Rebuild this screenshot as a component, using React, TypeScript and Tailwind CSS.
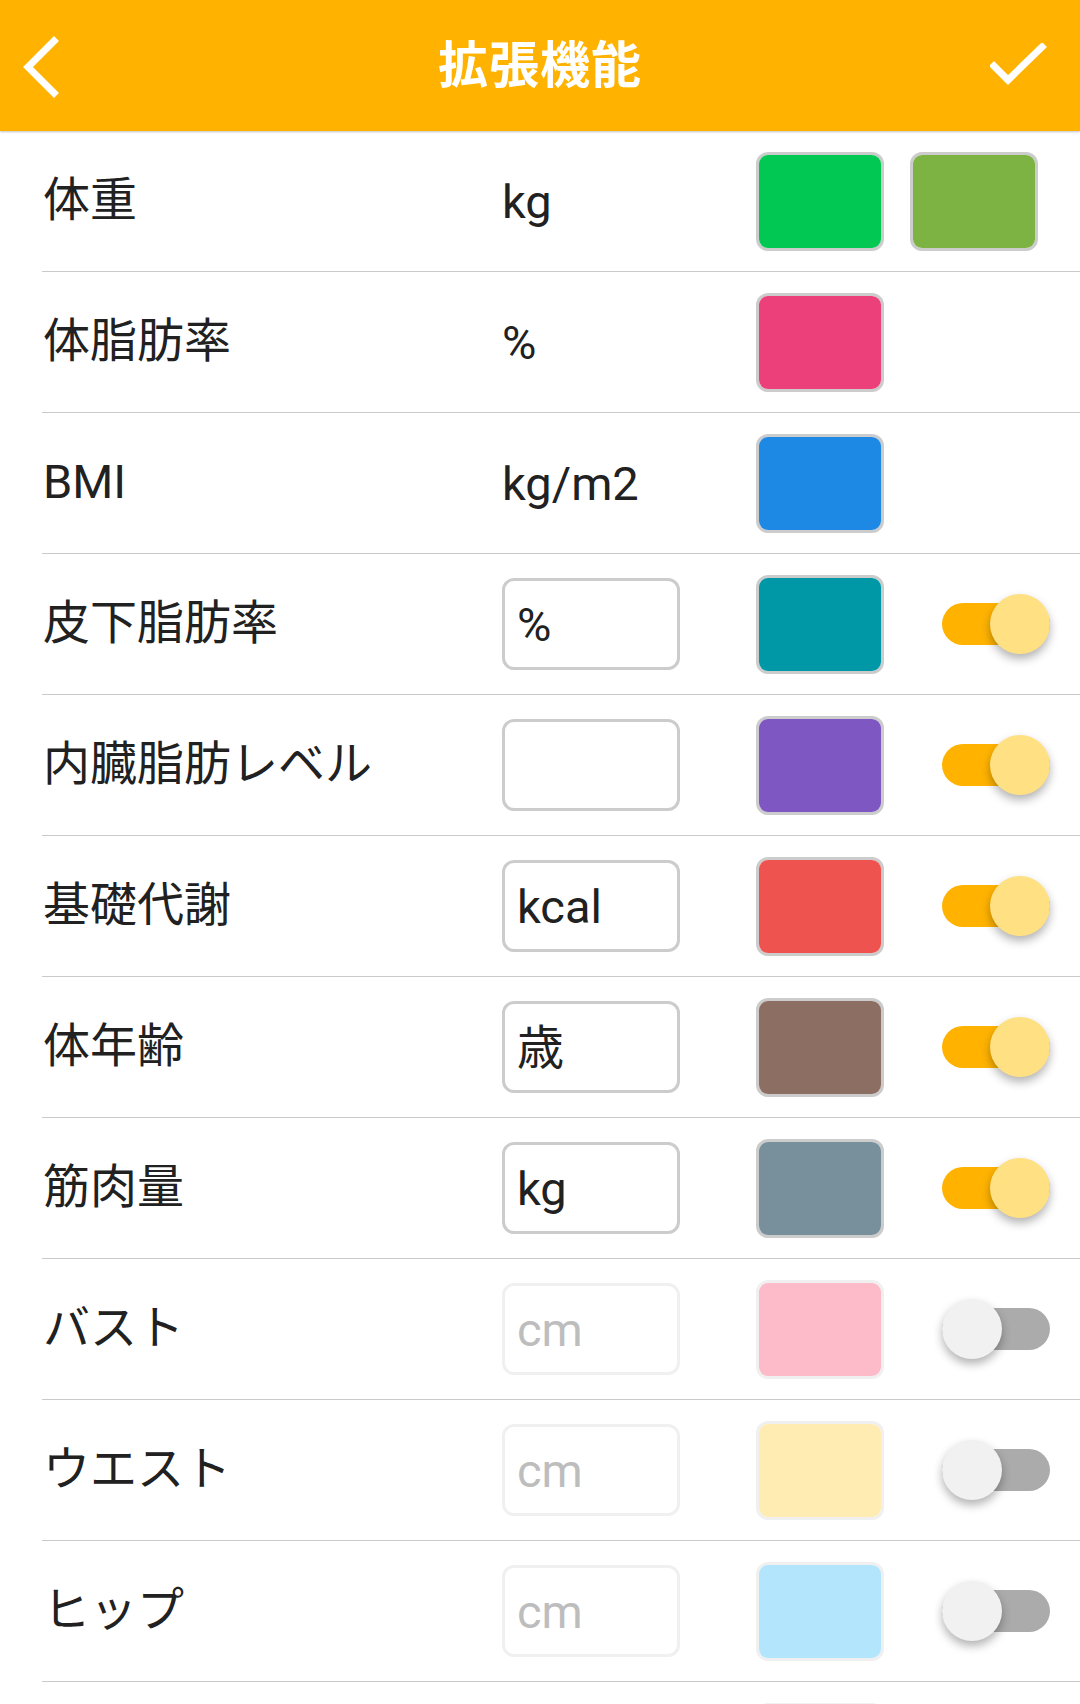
import React from 'react';

type Row = {
  label: string;
  unit: string;
  input: boolean;
  colors: string[];
  toggle?: 'on' | 'off';
};

const rows: Row[] = [
  { label: '体重', unit: 'kg', input: false, colors: ['#00C853', '#7CB342'] },
  { label: '体脂肪率', unit: '%', input: false, colors: ['#EC407A'] },
  { label: 'BMI', unit: 'kg/m2', input: false, colors: ['#1E88E5'] },
  { label: '皮下脂肪率', unit: '%', input: true, colors: ['#0097A7'], toggle: 'on' },
  { label: '内臓脂肪レベル', unit: '', input: true, colors: ['#7E57C2'], toggle: 'on' },
  { label: '基礎代謝', unit: 'kcal', input: true, colors: ['#EF5350'], toggle: 'on' },
  { label: '体年齢', unit: '歳', input: true, colors: ['#8D6E63'], toggle: 'on' },
  { label: '筋肉量', unit: 'kg', input: true, colors: ['#78909C'], toggle: 'on' },
  { label: 'バスト', unit: 'cm', input: true, colors: ['#FDBAC8'], toggle: 'off' },
  { label: 'ウエスト', unit: 'cm', input: true, colors: ['#FFECB3'], toggle: 'off' },
  { label: 'ヒップ', unit: 'cm', input: true, colors: ['#B3E5FC'], toggle: 'off' },
  // next row is only peeking in at the bottom edge
  { label: '', unit: '', input: true, colors: ['#DCEDC8'], toggle: 'off' },
];

function Toggle({ on }: { on: boolean }) {
  return (
    <div className="relative w-[108px] h-[60px] flex items-center">
      <div className={`w-full h-[42px] rounded-full ${on ? 'bg-[#FFB300]' : 'bg-[#ABABAB]'}`} />
      <div
        className={`absolute top-0 w-[60px] h-[60px] rounded-full shadow-[0_5px_10px_rgba(0,0,0,0.3)] ${
          on ? 'right-0 bg-[#FFE082]' : 'left-0 bg-[#F1F1F1]'
        }`}
      />
    </div>
  );
}

function SettingRow({ row }: { row: Row }) {
  const off = row.toggle === 'off';
  return (
    <div className="ml-[42px] h-[141px] border-b border-[#cacaca] flex items-center">
      <div className="w-[460px] pl-px pb-[4px] text-[47px] text-[#212121] leading-none">{row.label}</div>
      <div className="w-[178px]">
        {row.input ? (
          <div
            className={`h-[92px] rounded-[12px] border-[3px] flex items-center pl-[12px] text-[47px] leading-none ${
              off ? 'border-[#f0f0f0] text-[#BDBDBD]' : 'border-[#cccccc] text-[#212121]'
            }`}
          >
            {row.unit}
          </div>
        ) : (
          <div className="text-[47px] leading-none text-[#212121]">{row.unit}</div>
        )}
      </div>
      <div className="ml-[76px] flex gap-[26px]">
        {row.colors.map((c) => (
          <div
            key={c}
            className={`w-[128px] h-[99px] rounded-[12px] border-[3px] ${off ? 'border-[#f0f0f0]' : 'border-[#cccccc]'}`}
          >
            <div className="w-full h-full rounded-[9px]" style={{ backgroundColor: c }} />
          </div>
        ))}
      </div>
      {row.toggle && (
        <div className="ml-[58px]">
          <Toggle on={row.toggle === 'on'} />
        </div>
      )}
    </div>
  );
}

export default function App() {
  return (
    <div className="w-[1080px] bg-white font-['Roboto','Noto_Sans_CJK_JP',sans-serif]">
      <header className="relative z-10 h-[131px] bg-[#FFB300] flex items-center shadow-[0_1px_2px_rgba(0,0,0,0.25)]">
        <div className="w-[120px] pl-[20px] flex items-center pt-[2px]">
          <svg width="44" height="64" viewBox="0 0 44 64">
            <path d="M34 6 L8 32 L34 58" fill="none" stroke="white" strokeWidth="7" strokeLinecap="square" />
          </svg>
        </div>
        <h1 className="flex-1 text-center text-[50px] font-bold text-white leading-none tracking-[1px]">拡張機能</h1>
        <div className="w-[120px] pr-[30px] flex items-center justify-end pt-[4px]">
          <svg width="60" height="50" viewBox="0 0 60 50">
            <path d="M4 23 L18 37 L52 4" fill="none" stroke="white" strokeWidth="7" strokeLinecap="square" />
          </svg>
        </div>
      </header>
      {rows.map((r, i) => (
        <SettingRow key={i} row={r} />
      ))}
    </div>
  );
}
